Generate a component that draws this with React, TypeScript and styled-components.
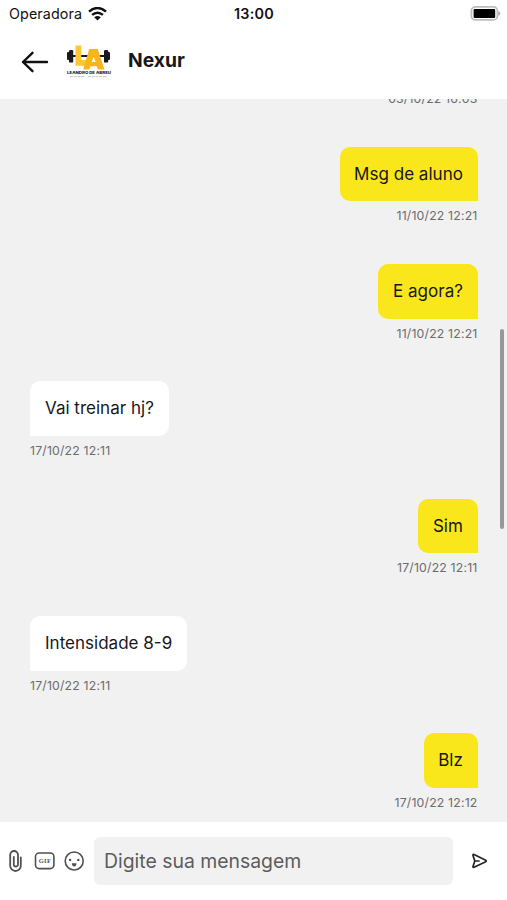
import React from "react";
import styled, { createGlobalStyle } from "styled-components";

const GlobalStyle = createGlobalStyle`
  * { box-sizing: border-box; }
  body { margin: 0; background: #fff; font-family: Inter, "Liberation Sans", sans-serif; color: #17171b; }
  svg { display: block; flex: none; }
`;

const Screen = styled.div`
  display: flex;
  flex-direction: column;
  width: 507px;
  height: 900px;
  overflow: hidden;
  background: #fff;
`;

const StatusBar = styled.div`
  display: grid;
  grid-template-columns: 1fr auto 1fr;
  align-items: center;
  height: 27px;
  padding: 0 6px 0 9px;
  flex: none;
  color: #111;
`;

const Carrier = styled.div`
  display: flex;
  align-items: center;
  gap: 6px;
  font-size: 14.3px;
  letter-spacing: 0.1px;
`;

const Clock = styled.div`
  font-size: 14.4px;
  font-weight: 600;
  letter-spacing: 0.2px;
  margin-right: 2px;
`;

const BatterySlot = styled.div`
  justify-self: end;
`;

const Header = styled.header`
  display: flex;
  align-items: center;
  height: 71.5px;
  flex: none;
  padding: 0 0 1px 21px;
`;

const Logo = styled.svg`
  margin-left: 17px;
`;

const Title = styled.h1`
  margin: 0 0 4px 16px;
  font-size: 19.3px;
  line-height: 24px;
  font-weight: 700;
`;

const Chat = styled.main`
  position: relative;
  display: flex;
  flex-direction: column;
  justify-content: flex-end;
  gap: 33.3px;
  height: 723.5px;
  flex: none;
  overflow: hidden;
  padding: 0 29.5px 4.7px 30px;
  background: #f1f1f1;
`;

const Message = styled.article<{ $mine: boolean }>`
  display: flex;
  flex: none;
  flex-direction: column;
  align-items: ${(p) => (p.$mine ? "flex-end" : "flex-start")};
`;

const Bubble = styled.div<{ $mine: boolean }>`
  height: 54.5px;
  padding: 0 ${(p) => (p.$mine ? "14.6px" : "15px")};
  font-size: 17.05px;
  line-height: 54px;
  white-space: nowrap;
  background: ${(p) => (p.$mine ? "#f9e71c" : "#fff")};
  border-radius: ${(p) => (p.$mine ? "10px 10px 0 10px" : "10px 10px 10px 0")};
`;

const Timestamp = styled.time`
  height: 29.5px;
  font-size: 12.3px;
  letter-spacing: 0.17px;
  line-height: 29px;
  color: #6c6c6c;
`;

const Scrollbar = styled.div`
  position: absolute;
  top: 230.5px;
  right: 3.5px;
  width: 4px;
  height: 200px;
  border-radius: 2px;
  background: #989898;
`;

const Composer = styled.footer`
  display: flex;
  align-items: center;
  height: 78px;
  padding: 0 19px 0 7px;
  flex: none;
`;

const Tools = styled.div`
  display: flex;
  align-items: center;
  width: 87px;
  gap: 9px;
  color: #505050;
`;

const Field = styled.div`
  width: 359px;
  height: 48px;
  padding-left: 10px;
  border-radius: 6px;
  background: #f1f1f1;
  color: #5c5c5c;
  font-size: 19.4px;
  line-height: 49px;
`;

const SendSlot = styled.div`
  margin-left: auto;
`;

type ChatMessage = { text?: string; date: string; mine: boolean };

const messages: ChatMessage[] = [
  { date: "03/10/22 16:03", mine: true },
  { text: "Msg de aluno", date: "11/10/22 12:21", mine: true },
  { text: "E agora?", date: "11/10/22 12:21", mine: true },
  { text: "Vai treinar hj?", date: "17/10/22 12:11", mine: false },
  { text: "Sim", date: "17/10/22 12:11", mine: true },
  { text: "Intensidade 8-9", date: "17/10/22 12:11", mine: false },
  { text: "Blz", date: "17/10/22 12:12", mine: true },
];

const Wifi = () => (
  <svg width="19" height="14" viewBox="0 0 19 14" fill="none" stroke="#111" strokeWidth="2.5">
    <path d="M1 4.6Q9.5-2.5 18 4.6M4.1 7.9q5.4-4.4 10.8 0" />
    <path d="M6.2 10.2q3.3-2.5 6.6 0L9.5 13.4z" fill="#111" stroke="none" />
  </svg>
);

const Battery = () => (
  <svg width="31" height="15" viewBox="0 0 31 15">
    <rect x="1.4" y="0.9" width="26" height="13" rx="4" fill="#fff" stroke="#bdbdbd" strokeWidth="1.8" />
    <rect x="3.6" y="2.9" width="21.6" height="9" rx="1" fill="#000" />
    <path d="M28.4 5.1q1.9.6 1.9 2.3t-1.9 2.3z" fill="#aaa" />
  </svg>
);

const BackArrow = () => (
  <svg width="28" height="22" viewBox="0 0 28 22" fill="none" stroke="#111" strokeWidth="2.4" strokeLinecap="round" strokeLinejoin="round">
    <path d="M26 11H2M11.5 1.8 2 11l9.5 9.2" />
  </svg>
);

const GymLogo = () => (
  <Logo width="46" height="36" viewBox="0 0 46 36">
    <g fill="#17191b">
      <rect x="1" y="8" width="2.5" height="8" rx="1" />
      <rect x="3" y="6" width="4.2" height="12.6" rx="1.2" />
      <rect x="6" y="11" width="33" height="2" />
      <rect x="38" y="6" width="4.2" height="12.6" rx="1.2" />
      <rect x="41.5" y="8" width="2.5" height="8" rx="1" />
    </g>
    <path d="M9.5 1.5h5.8v14.6h6.2v5.6H9.5z" fill="#ffc635" />
    <path fillRule="evenodd" d="M23.2 5h8.6L38.4 25.5h-6.6l-.9-3.3h-6.4l-1.2 3.3h-6.1zm4.4 7.4-1.8 5.5h3.8z" fill="#f9b51e" />
    <text x="1" y="30.4" fontFamily="Inter, sans-serif" fontSize="4" fontWeight="800" textLength="44" lengthAdjust="spacingAndGlyphs" fill="#222">LEANDRO DE ABREU</text>
    <path d="M4 32.7h14M22 32.7h19" stroke="#c4c4c4" strokeWidth="1" strokeDasharray="3 .7" />
  </Logo>
);

const Paperclip = () => (
  <svg width="18" height="24" viewBox="0 0 18 24" fill="none" stroke="currentColor" strokeWidth="1.8" strokeLinecap="round">
    <path d="M13.8 8.5v8.2a5.3 5.3 0 0 1-10.6 0V5.9a3.9 3.9 0 0 1 7.8 0v9.5a2 2 0 0 1-4.2 0V8" />
  </svg>
);

const Gif = () => (
  <svg width="21" height="18" viewBox="0 0 21 18">
    <rect x="1.5" y="1" width="18.4" height="15.6" rx="3.6" fill="none" stroke="currentColor" strokeWidth="1.6" />
    <text x="4.8" y="11" fontFamily="Liberation Serif, serif" fontWeight="700" fontSize="6.4" textLength="12" lengthAdjust="spacing" fill="currentColor">GIF</text>
  </svg>
);

const Smile = () => (
  <svg width="20" height="20" viewBox="0 0 20 20" fill="none">
    <circle cx="10.2" cy="10" r="9" stroke="currentColor" strokeWidth="1.6" />
    <circle cx="6.1" cy="8.9" r="1.2" fill="currentColor" />
    <circle cx="14.3" cy="8.9" r="1.2" fill="currentColor" />
    <path d="M7.9 12.2h4.6q-.2 3.3-2.3 3.3t-2.3-3.3z" fill="currentColor" />
  </svg>
);

const Send = () => (
  <svg width="17" height="16" viewBox="0 0 17 16" fill="none" stroke="#242428" strokeWidth="1.7" strokeLinejoin="round" strokeLinecap="round">
    <path d="M2 2.4Q1.8 1.1 3.1 1.6L14.7 7.3q1.1.7 0 1.4L3.1 14.2q-1.3.5-1.1-.8L3.8 8zM3.8 8H8" />
  </svg>
);

export default function App() {
  return (
    <>
      <GlobalStyle />
      <Screen>
        <StatusBar>
          <Carrier>
            Operadora
            <Wifi />
          </Carrier>
          <Clock>13:00</Clock>
          <BatterySlot>
            <Battery />
          </BatterySlot>
        </StatusBar>
        <Header>
          <BackArrow />
          <GymLogo />
          <Title>Nexur</Title>
        </Header>
        <Chat>
          {messages.map((m, i) => (
            <Message key={i} $mine={m.mine}>
              {m.text && <Bubble $mine={m.mine}>{m.text}</Bubble>}
              <Timestamp>{m.date}</Timestamp>
            </Message>
          ))}
          <Scrollbar />
        </Chat>
        <Composer>
          <Tools>
            <Paperclip />
            <Gif />
            <Smile />
          </Tools>
          <Field>Digite sua mensagem</Field>
          <SendSlot>
            <Send />
          </SendSlot>
        </Composer>
      </Screen>
    </>
  );
}
